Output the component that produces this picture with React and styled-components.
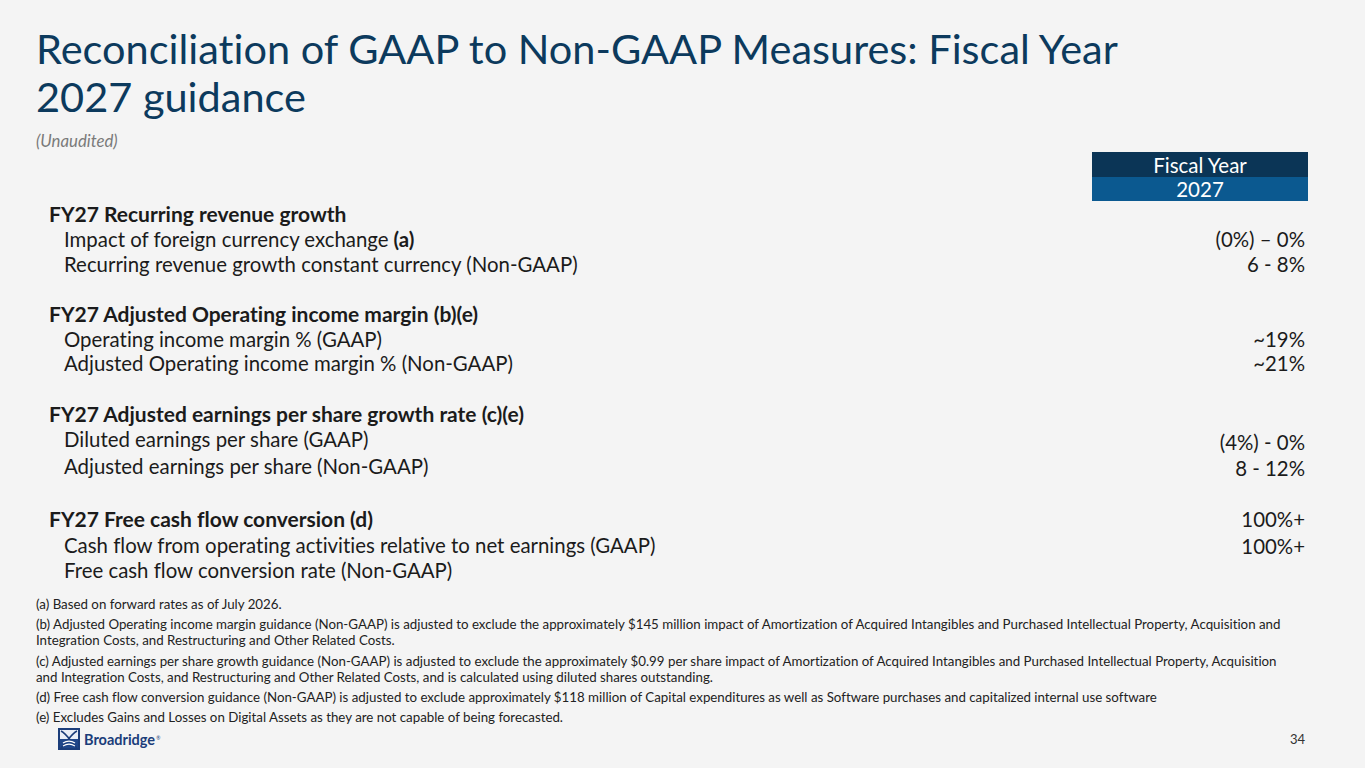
import React from "react";
import styled, { createGlobalStyle } from "styled-components";

const GlobalStyle = createGlobalStyle`
  html, body {
    margin: 0;
    padding: 0;
    background: #f4f4f4;
  }
  * {
    box-sizing: border-box;
  }
`;

const Slide = styled.div`
  width: 1365px;
  height: 768px;
  padding: 24px 57px 0 36px;
  display: flex;
  flex-direction: column;
  font-family: Lato, "Liberation Sans", sans-serif;
  font-variant-ligatures: none;
  color: #1b1b1b;
  overflow: hidden;
`;

const Title = styled.h1`
  margin: 0;
  font-size: 41.5px;
  font-weight: 400;
  line-height: 48px;
  color: #0c3a5d;
`;

const Subtitle = styled.div`
  margin-top: 12px;
  font-size: 16.8px;
  line-height: 18px;
  font-style: italic;
  color: #7a7a7a;
`;

const Table = styled.div`
  margin-top: 2px;
  display: grid;
  grid-template-columns: 1fr 216px;
`;

const HeadCell = styled.div`
  grid-column: 2;
  height: ${(p) => p.h}px;
  display: flex;
  align-items: center;
  justify-content: center;
  background: ${(p) => p.bg};
  color: #ffffff;
  font-size: 20.5px;
`;

const Label = styled.div`
  grid-column: 1;
  height: ${(p) => p.h}px;
  display: flex;
  align-items: center;
  padding-left: ${(p) => (p.bold ? 13 : 28)}px;
  font-size: ${(p) => (p.bold ? 21 : 20.4)}px;
  font-weight: ${(p) => (p.bold ? 700 : 400)};
  white-space: nowrap;
`;

const Value = styled.div`
  grid-column: 2;
  height: ${(p) => p.h}px;
  display: flex;
  align-items: center;
  justify-content: flex-end;
  padding-right: 3px;
  padding-top: ${(p) => p.shift * 2}px;
  font-size: 20.4px;
  white-space: nowrap;
`;

const Notes = styled.div`
  margin-top: 14px;
  display: flex;
  flex-direction: column;
  gap: 4px;
  font-size: 13.3px;
  line-height: 16.2px;
  color: #222222;
`;

const Note = styled.p`
  margin: 0;
  white-space: nowrap;
`;

const Footer = styled.div`
  margin-top: 2px;
  display: flex;
  align-items: center;
  justify-content: space-between;
  height: 24px;
`;

const Logo = styled.div`
  margin-left: 22px;
  display: flex;
  align-items: center;
  gap: 4px;
`;

const LogoText = styled.span`
  font-size: 14.5px;
  font-weight: 700;
  color: #1b3d7a;
`;

const Reg = styled.sup`
  font-size: 5px;
  font-weight: 400;
  vertical-align: 5px;
  margin-left: 1px;
`;

const PageNum = styled.span`
  margin-right: 3px;
  font-size: 13px;
  color: #333333;
`;

const rows = [
  { label: "FY27 Recurring revenue growth", bold: true, h: 25 },
  { label: "Impact of foreign currency exchange ", tag: "(a)", value: "(0%) – 0%", h: 25 },
  { label: "Recurring revenue growth constant currency (Non-GAAP)", value: "6 - 8%", h: 25 },
  { label: "", h: 25 },
  { label: "FY27 Adjusted Operating income margin (b)(e)", bold: true, h: 25 },
  { label: "Operating income margin % (GAAP)", value: "~19%", h: 25 },
  { label: "Adjusted Operating income margin % (Non-GAAP)", value: "~21%", h: 24 },
  { label: "", h: 25 },
  { label: "FY27 Adjusted earnings per share growth rate (c)(e)", bold: true, h: 26 },
  { label: "Diluted earnings per share (GAAP)", value: "(4%) - 0%", h: 25, shift: 3 },
  { label: "Adjusted earnings per share (Non-GAAP)", value: "8 - 12%", h: 29, shift: 2 },
  { label: "", h: 25 },
  { label: "FY27 Free cash flow conversion (d)", bold: true, value: "100%+", h: 26, shift: 1 },
  { label: "Cash flow from operating activities relative to net earnings (GAAP)", value: "100%+", h: 27, shift: 1 },
  { label: "Free cash flow conversion rate (Non-GAAP)", h: 24 },
];

const notes = [
  ["(a) Based on forward rates as of July 2026."],
  [
    "(b) Adjusted Operating income margin guidance (Non-GAAP) is adjusted to exclude the approximately $145 million impact of Amortization of Acquired Intangibles and Purchased Intellectual Property, Acquisition and",
    "Integration Costs, and Restructuring and Other Related Costs.",
  ],
  [
    "(c) Adjusted earnings per share growth guidance (Non-GAAP) is adjusted to exclude the approximately $0.99 per share impact of Amortization of Acquired Intangibles and Purchased Intellectual Property, Acquisition",
    "and Integration Costs, and Restructuring and Other Related Costs, and is calculated using diluted shares outstanding.",
  ],
  [
    "(d) Free cash flow conversion guidance (Non-GAAP) is adjusted to exclude approximately $118 million of Capital expenditures as well as Software purchases and capitalized internal use software",
  ],
  ["(e) Excludes Gains and Losses on Digital Assets as they are not capable of being forecasted."],
];

const BroadridgeMark = () => (
  <svg width="22" height="22" viewBox="0 0 22 22">
    <rect width="22" height="22" fill="#1b3d7a" />
    <rect x="2" y="2" width="18" height="9" fill="#e9eef6" />
    <rect x="2" y="11" width="18" height="9" fill="#20478a" />
    <path d="M3 3 C9 6, 13 14, 19 20" stroke="#1b3d7a" strokeWidth="1.5" fill="none" />
    <path d="M19 3 C13 6, 9 14, 3 20" stroke="#1b3d7a" strokeWidth="1.5" fill="none" />
    <path d="M5 15 C9 12.5, 13 12.5, 17 15" stroke="#ffffff" strokeWidth="1.3" fill="none" />
    <path d="M5 18 C9 15.5, 13 15.5, 17 18" stroke="#ffffff" strokeWidth="1.1" fill="none" />
  </svg>
);

export default function App() {
  return (
    <>
      <GlobalStyle />
      <Slide>
        <Title>
          Reconciliation of GAAP to Non-GAAP Measures: Fiscal Year
          <br />
          2027 guidance
        </Title>
        <Subtitle>(Unaudited)</Subtitle>
        <Table>
          <HeadCell h={25} bg="#0b3556">
            Fiscal Year
          </HeadCell>
          <HeadCell h={24} bg="#0b5990">
            2027
          </HeadCell>
          {rows.map((r, i) => (
            <React.Fragment key={i}>
              <Label h={r.h} bold={r.bold}>
                {r.label}
                {r.tag && <b>&nbsp;{r.tag}</b>}
              </Label>
              <Value h={r.h} shift={r.shift || 0}>
                {r.value || ""}
              </Value>
            </React.Fragment>
          ))}
        </Table>
        <Notes>
          {notes.map((lines, i) => (
            <Note key={i}>
              {lines.map((l, j) => (
                <React.Fragment key={j}>
                  {j > 0 && <br />}
                  {l}
                </React.Fragment>
              ))}
            </Note>
          ))}
        </Notes>
        <Footer>
          <Logo>
            <BroadridgeMark />
            <LogoText>
              Broadridge<Reg>®</Reg>
            </LogoText>
          </Logo>
          <PageNum>34</PageNum>
        </Footer>
      </Slide>
    </>
  );
}
